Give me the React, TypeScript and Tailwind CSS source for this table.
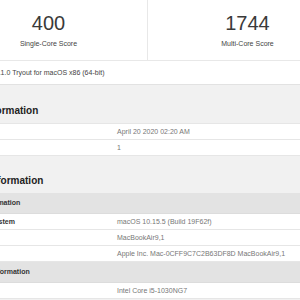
import React from "react";

const font = { fontFamily: '"Liberation Sans", Arial, sans-serif' };

function Row({ label, value, bold = true }: { label: string; value: string; bold?: boolean }) {
  return (
    <div className="flex h-[16px] items-center border-b border-[#e6e6e6] bg-white text-[7px] leading-[10px]">
      <div className={`w-[167px] shrink-0 pl-[5px] text-[#333] ${bold ? "font-bold" : ""}`}>{label}</div>
      <div className="text-[#777]">{value}</div>
    </div>
  );
}

function Band({ title }: { title: string }) {
  return (
    <div className="flex h-[21px] items-center border-b border-[#dcdcdc] bg-[#e3e3e3] pl-[5px] text-[7px] font-bold leading-[10px] text-[#333]">
      {title}
    </div>
  );
}

export default function App() {
  return (
    <div className="h-[300px] w-[300px] overflow-hidden bg-[#f1f1f1]" style={font}>
      <div className="ml-[-50px] w-[397px]">
        <div className="bg-white">
          <div className="flex h-[61px] border-b border-[#e8e8e8]">
            <div className="flex w-[198px] flex-col items-center border-r border-[#e8e8e8] pt-[13px]">
              <div className="text-[20px] leading-[20px] text-[#3a3a3a]">400</div>
              <div className="mt-[6px] text-[7px] leading-[10px] text-[#444]">Single-Core Score</div>
            </div>
            <div className="flex flex-1 flex-col items-center pt-[13px]">
              <div className="text-[20px] leading-[20px] text-[#3a3a3a]">1744</div>
              <div className="mt-[6px] text-[7px] leading-[10px] text-[#444]">Multi-Core Score</div>
            </div>
          </div>
          <div className="flex h-[24px] items-center border-b border-[#e2e2e2] pl-[7px] text-[7px] leading-[10px] text-[#444]">
            Geekbench 5.1.0 Tryout for macOS x86 (64-bit)
          </div>
        </div>

        <div className="mt-[20px] h-[12px] text-[10px] font-bold leading-[12px] text-[#222]">Result Information</div>
        <div className="mt-[6px] border-t border-[#e6e6e6]">
          <Row label="Upload Date" value="April 20 2020 02:20 AM" />
          <Row label="Views" value="1" />
        </div>

        <div className="mt-[19px] h-[12px] text-[10px] font-bold leading-[12px] text-[#222]">System Information</div>
        <div className="mt-[6px]">
          <Band title="System Information" />
          <Row label="Operating System" value="macOS 10.15.5 (Build 19F62f)" />
          <Row label="Model" value="MacBookAir9,1" />
          <Row label="Motherboard" value="Apple Inc. Mac-0CFF9C7C2B63DF8D MacBookAir9,1" />
          <Band title="Processor Information" />
          <Row label="Name" value="Intel Core i5-1030NG7" />
        </div>
      </div>
    </div>
  );
}
